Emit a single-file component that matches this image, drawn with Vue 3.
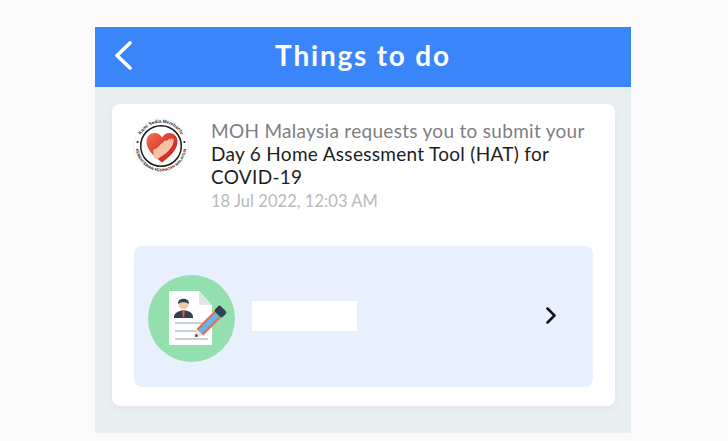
<script setup>
const title = 'Things to do'
</script>

<template>
  <div class="page">
    <div class="phone">
      <header class="bar">
        <svg class="back" width="20" height="30" viewBox="0 0 20 30">
          <path d="M17 3 L4 15.5 L17 28" fill="none" stroke="#fff" stroke-width="3.6" stroke-linecap="round" stroke-linejoin="round" />
        </svg>
        <h1>{{ title }}</h1>
      </header>
      <main class="body">
        <section class="card">
          <div class="head">
            <svg class="logo" width="56" height="56" viewBox="0 0 56 56">
              <defs>
                <linearGradient id="heart" x1="0" y1="0" x2="1" y2="1">
                  <stop offset="0" stop-color="#f0754f" />
                  <stop offset=".55" stop-color="#dc352c" />
                  <stop offset="1" stop-color="#c5232b" />
                </linearGradient>
                <path id="top" d="M4.8 28 A23.2 23.2 0 0 1 51.2 28" />
                <path id="bot" d="M2.6 28 A25.4 25.4 0 0 0 53.4 28" />
              </defs>
              <circle cx="28" cy="28" r="27.5" fill="#fff" stroke="#e4e4e4" stroke-width=".6" />
              <circle cx="28" cy="28" r="20.3" fill="#fff" stroke="#1a1a1a" stroke-width="1.5" />
              <text class="ring" font-size="4.6"><textPath href="#top" startOffset="50%" text-anchor="middle">Kami Sedia Membantu</textPath></text>
              <text class="ring" font-size="3.9"><textPath href="#bot" startOffset="50%" text-anchor="middle">KEMENTERIAN KESIHATAN MALAYSIA</textPath></text>
              <circle cx="4.6" cy="24" r="1.1" fill="#222" />
              <circle cx="51.4" cy="24" r="1.1" fill="#222" />
              <path d="M29 44.5 C23 39.5 13.5 33 13.5 23.5 C13.5 18 17.5 15 21.5 15 C25 15 27.7 16.8 29 19.5 C30.5 16.8 33 15 36.5 15 C41 15 44.5 18.5 44.5 23.5 C44.5 33 35 39.5 29 44.5Z" fill="url(#heart)" />
              <path d="M21 40 L20 32 C23 31 25 29 27 27 L32.5 22 L33.6 23.2 L36 20.5 L37.2 21.6 L38.6 20 L39.6 21.2 L41 21 L40 26 C38 31 34 35 29 38 L24.5 41Z" fill="#f6c1a4" />
            </svg>
            <div class="text">
              <p class="from">MOH Malaysia requests you to submit your</p>
              <p class="task">Day 6 Home Assessment Tool (HAT) for COVID-19</p>
              <p class="date">18 Jul 2022, 12:03 AM</p>
            </div>
          </div>
          <div class="item">
            <svg class="art" width="87" height="87" viewBox="0 0 87 87">
              <circle cx="43.5" cy="43.5" r="43.5" fill="#94dfae" />
              <path d="M21 16 H51 L64 30 V70 H21Z" fill="#fff" />
              <path d="M51 16 L64 30 H51Z" fill="#e2e5ea" />
              <path d="M26 42 C26 37.5 31 36.5 33 35.5 H38 C41 36.5 45 37.5 45 42 V43 H26Z" fill="#2f4254" />
              <path d="M34.2 35.5 H36.8 L36.3 42 H34.7Z" fill="#e5573f" />
              <circle cx="35.5" cy="29" r="5.2" fill="#f3c6a8" />
              <path d="M30.2 29 C29 22 42 22 40.8 29 C38 26.5 33 26.5 30.2 29Z" fill="#2f4254" />
              <path d="M27 48 H55 M27 56 H50 M27 64 H60" stroke="#c9cfdc" stroke-width="2.2" />
              <g transform="translate(47 62) rotate(-45)">
                <path d="M0 0 L7 -4.8 V4.8Z" fill="#f3e0cb" />
                <path d="M0 0 L3 -2 V2Z" fill="#2f4254" />
                <rect x="7" y="-4.8" width="25" height="9.6" fill="#f4694f" />
                <rect x="7" y="-2.4" width="25" height="4.8" fill="#5cb8ef" />
                <rect x="32" y="-5.4" width="8" height="10.8" rx="2" fill="#2f4254" />
              </g>
            </svg>
            <div class="blank"></div>
            <svg class="chev" width="12" height="17" viewBox="0 0 12 17">
              <path d="M2.5 1.5 L9.5 8.5 L2.5 15.5" fill="none" stroke="#111418" stroke-width="2.5" stroke-linecap="round" stroke-linejoin="round" />
            </svg>
          </div>
        </section>
      </main>
    </div>
  </div>
</template>

<style>
html, body { margin: 0; background: #fafafa; }
</style>

<style scoped>
.page {
  width: 728px;
  height: 441px;
  background: #fafafa;
  padding: 27px 97px 8px 95px;
  box-sizing: border-box;
  overflow: hidden;
}
.phone {
  display: flex;
  flex-direction: column;
  height: 406px;
  background: #e9eff0;
}
.bar {
  height: 60px;
  flex: none;
  background: #3b85fb;
  display: flex;
  align-items: center;
  justify-content: center;
  position: relative;
}
.back { position: absolute; left: 18px; top: 13px; }
h1 {
  margin: -4px 0 0;
  color: #fff;
  font: 700 28px/1 Lato, sans-serif;
  letter-spacing: 1.8px;
}
.body { padding: 17px 16px 27px 17px; flex: 1; display: flex; }
.card {
  flex: 1;
  background: #fff;
  border-radius: 8px;
  box-shadow: 0 2px 6px rgba(90, 110, 120, .08);
  padding: 14px 22px 19px;
  display: flex;
  flex-direction: column;
  box-sizing: border-box;
}
.head { display: flex; gap: 21px; height: 128px; flex: none; }
.logo { flex: none; margin-left: -1px; }
.ring { font-family: "Liberation Sans", sans-serif; font-weight: 700; fill: #1f1f1f; }
.text { padding-top: 1px; margin-left: 1px; font: 19px/23px Lato, sans-serif; letter-spacing: .3px; }
p { margin: 0; }
.from { color: #7e7e7e; white-space: nowrap; }
.task { color: #1d1d1d; width: 370px; }
.date { color: #b9b9b9; font-size: 16.5px; line-height: 25px; letter-spacing: .05px; margin-top: 1px; }
.item {
  flex: 1;
  background: #e8effd;
  border-radius: 8px;
  display: flex;
  align-items: center;
  padding: 0 36px 0 14px;
}
.art { flex: none; margin-top: 3px; }
.blank { width: 105px; height: 30px; background: #fff; margin-left: 17px; margin-top: -1px; }
.chev { margin-left: auto; margin-top: -2px; }
</style>
